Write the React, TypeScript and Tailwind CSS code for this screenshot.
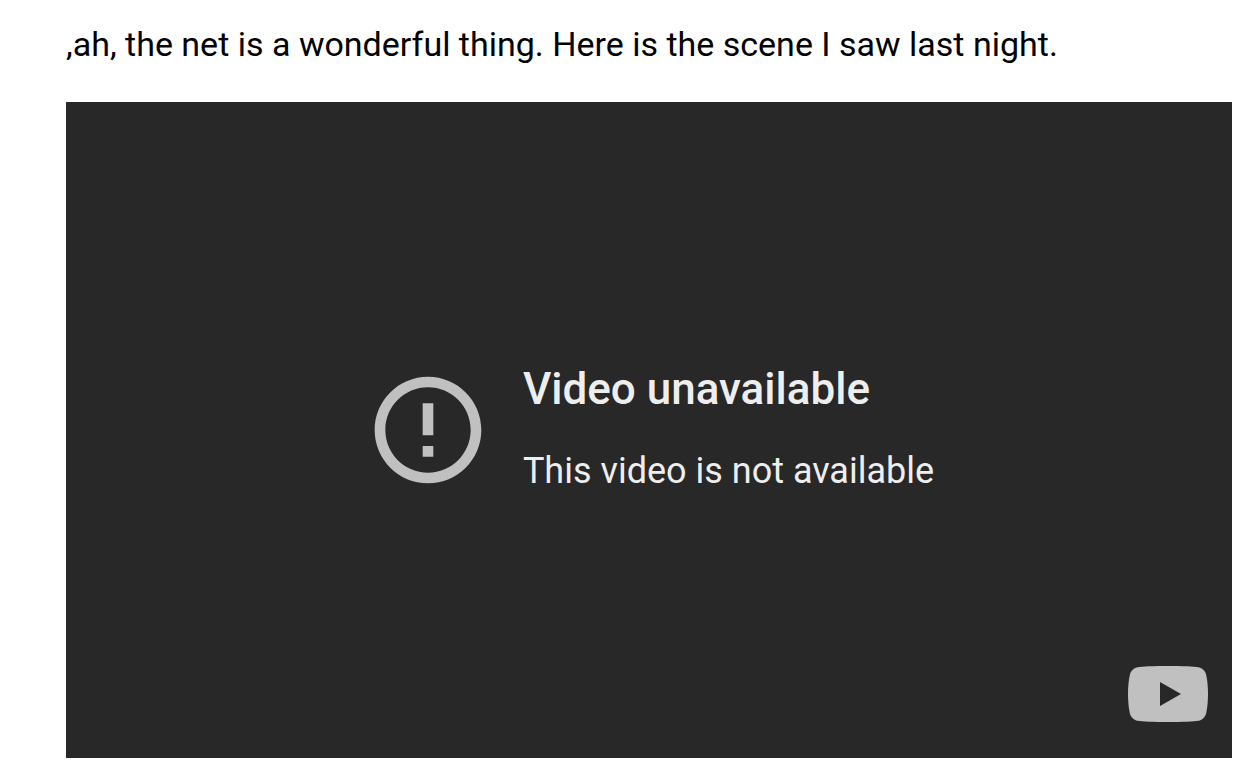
export default function App() {
  return (
    <main className="min-h-screen bg-white pt-6 pr-2 pb-2 pl-[66px] font-['Roboto',sans-serif]">
      <p className="text-[34px] leading-[40px] text-black">
        ,ah, the net is a wonderful thing. Here is the scene I saw last night.
      </p>
      <section
        aria-label="Video player"
        className="relative mt-[38px] flex h-[656px] items-center justify-center bg-[#282828]"
      >
        <div className="flex items-center gap-[31px]">
          <svg viewBox="0 0 24 24" className="size-32 shrink-0 fill-[#c0c0c0]" aria-hidden="true">
            <path d="M11 15h2v2h-2zm0-8h2v6h-2zm1-5C6.48 2 2 6.48 2 12s4.48 10 10 10 10-4.48 10-10S17.52 2 12 2zm0 18c-4.42 0-8-3.58-8-8s3.58-8 8-8 8 3.58 8 8-3.58 8-8 8z" />
          </svg>
          <div className="pb-1 text-[#eeeeee]">
            <h1 className="text-[44px] leading-[52px] font-medium">Video unavailable</h1>
            <p className="mt-[34px] text-[36px] leading-[44px]">This video is not available</p>
          </div>
        </div>
        <a href="#youtube" aria-label="Watch on YouTube" className="absolute right-6 bottom-9">
          <svg viewBox="0 0 80 56" className="h-14 w-20" aria-hidden="true">
            <path
              fill="#c0c0c0"
              d="M40 0C54 0 66 .4 70.500 1.200C74.500 2 77.300 5 78.200 9C79.500 15 80 21 80 28S79.500 41 78.200 47C77.300 51 74.500 54 70.500 54.800C66 55.600 54 56 40 56S14 55.600 9.500 54.800C5.500 54 2.700 51 1.800 47C.5 41 0 35 0 28S.5 15 1.800 9C2.700 5 5.500 2 9.500 1.200C14 .4 26 0 40 0z"
            />
            <path fill="#282828" d="M32 16v24l21-12z" />
          </svg>
        </a>
      </section>
    </main>
  );
}
